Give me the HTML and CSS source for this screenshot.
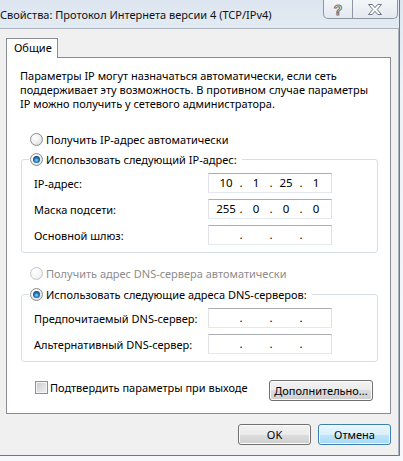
FILE: index.html
```html
<!DOCTYPE html>
<html lang="ru">
<head>
<meta charset="utf-8">
<title>Свойства: Протокол Интернета версии 4 (TCP/IPv4)</title>
<link rel="stylesheet" href="styles.css">
</head>
<body>
<div class="window">
  <div class="titlebar">
    <div class="title">Свойства: Протокол Интернета версии 4 (TCP/IPv4)</div>
    <div class="caption-btns">
      <div class="cbtn help">
        <svg width="14" height="15" viewBox="0 0 14 15"><text x="7" y="12.5" text-anchor="middle" font-family="Liberation Sans, sans-serif" font-weight="bold" font-size="14" fill="#ffffff" stroke="#6d7681" stroke-width="1">?</text></svg>
      </div>
      <div class="cbtn close">
        <svg width="14" height="11" viewBox="0 0 14 11"><path d="M0.5 0.5h3.8l2.7 3.2 2.7-3.2h3.8l-4.3 5 4.3 5h-3.8l-2.7-3.2-2.7 3.2h-3.8l4.3-5z" fill="#ffffff" stroke="#6d7681" stroke-width="1"/></svg>
      </div>
    </div>
  </div>
  <div class="client">
    <div class="tabs"><div class="tab">Общие</div></div>
    <div class="panel">
      <p class="intro">Параметры IP могут назначаться автоматически, если сеть<br>поддерживает эту возможность. В противном случае параметры<br>IP можно получить у сетевого администратора.</p>
      <div class="opt opt-first"><span class="radio"></span>Получить IP-адрес автоматически</div>
      <fieldset class="group group-ip">
        <legend><span class="opt"><span class="radio checked"></span>Использовать следующий IP-адрес:</span></legend>
        <div class="row"><span class="lbl">IP-адрес:</span>
          <div class="ip"><span>10</span><span>.</span><span>1</span><span>.</span><span>25</span><span>.</span><span>1</span></div>
        </div>
        <div class="row"><span class="lbl">Маска подсети:</span>
          <div class="ip"><span>255</span><span>.</span><span>0</span><span>.</span><span>0</span><span>.</span><span>0</span></div>
        </div>
        <div class="row"><span class="lbl">Основной шлюз:</span>
          <div class="ip"><span></span><span>.</span><span></span><span>.</span><span></span><span>.</span><span></span></div>
        </div>
      </fieldset>
      <div class="opt opt-mid disabled"><span class="radio off"></span>Получить адрес DNS-сервера автоматически</div>
      <fieldset class="group group-dns">
        <legend><span class="opt"><span class="radio checked"></span>Использовать следующие адреса DNS-серверов:</span></legend>
        <div class="row"><span class="lbl">Предпочитаемый DNS-сервер:</span>
          <div class="ip"><span></span><span>.</span><span></span><span>.</span><span></span><span>.</span><span></span></div>
        </div>
        <div class="row"><span class="lbl">Альтернативный DNS-сервер:</span>
          <div class="ip"><span></span><span>.</span><span></span><span>.</span><span></span><span>.</span><span></span></div>
        </div>
      </fieldset>
      <div class="bottom-row">
        <div class="opt chk"><span class="checkbox"></span>Подтвердить параметры при выходе</div>
        <button class="btn adv">Дополнительно...</button>
      </div>
    </div>
    <div class="actions">
      <button class="btn">OK</button>
      <button class="btn cancel">Отмена</button>
    </div>
  </div>
</div>
</body>
</html>
```
FILE: styles.css
```css
* { box-sizing: border-box; }
html, body { margin: 0; }
body {
  width: 403px;
  height: 461px;
  overflow: hidden;
  background: linear-gradient(#dde6f0, #eef3f8 20%, #f6f8fb);
  font-family: "Segoe UI", "Noto Sans", sans-serif;
  font-size: 11px;
  color: #000;
}
.window {
  width: 400px;
  border-right: 1px solid #6e7b8b;
}
.titlebar {
  height: 28px;
  display: flex;
  align-items: flex-start;
}
.title {
  flex: 1;
  padding-top: 7px;
  font-size: 11px;
  line-height: 16px;
  white-space: nowrap;
  color: #111;
}
.caption-btns {
  display: flex;
  margin-right: 1px;
}
.cbtn {
  height: 19px;
  border: 1px solid #8d96a1;
  border-top: none;
  display: flex;
  align-items: center;
  justify-content: center;
  background: linear-gradient(#f3f6f9, #e4e9ef);
}
.help { width: 30px; border-radius: 0 0 0 5px; }
.close { width: 45px; border-left: none; border-radius: 0 0 5px 0; }

.client {
  height: 428px;
  background: #f0f0f0;
  border-top: 1px solid #a9b2bd;
  border-right: 1px solid #a9b2bd;
  border-bottom: 1px solid #6f7883;
  padding: 9px 0 0 6px;
}
.tabs { display: flex; }
.tab {
  position: relative;
  z-index: 1;
  width: 52px;
  height: 20px;
  margin-bottom: -1px;
  padding-left: 7px;
  border: 1px solid #898c95;
  border-bottom: none;
  background: #fff;
  line-height: 18px;
}
.panel {
  width: 385px;
  height: 357px;
  border: 1px solid #898c95;
  background: #fff;
}
.intro {
  margin: 11px 0 0 13px;
  line-height: 14px;
  white-space: nowrap;
}
.opt {
  display: flex;
  align-items: center;
  height: 15px;
  line-height: 15px;
  white-space: nowrap;
}
.opt-first { margin: 21px 0 0 23px; }
.opt-mid { margin: 13px 0 0 23px; }
.disabled { color: #8d8d8d; }

.radio {
  flex: none;
  width: 13px;
  height: 13px;
  margin-right: 3px;
  border-radius: 50%;
  border: 1px solid #8a8c8e;
  background: radial-gradient(circle at 35% 30%, #ffffff 0, #f1f1f1 45%, #d2d4d6 100%);
  display: flex;
  align-items: center;
  justify-content: center;
}
.radio.checked::after {
  content: "";
  width: 7px;
  height: 7px;
  border-radius: 50%;
  background: radial-gradient(circle at 50% 60%, #8fdcff 0, #2b86c6 35%, #0d3f6a 75%, #0a2a44 100%);
}
.radio.off {
  border-color: #c4c6c8;
  background: radial-gradient(circle at 35% 30%, #ffffff 0, #f6f6f6 50%, #e6e6e6 100%);
}
.checkbox {
  flex: none;
  width: 13px;
  height: 13px;
  margin-right: 2px;
  border: 1px solid #8e8f8f;
  box-shadow: inset 0 0 0 1px #f4f4f4;
  background: linear-gradient(135deg, #c6cacf, #f2f2f2);
}

.group {
  width: 357px;
  margin: 5px 0 0 14px;
  padding: 0 0 7px 0;
  border: 1px solid #d5dfe5;
  border-radius: 3px;
  min-width: 0;
}
.group-dns { margin-top: 6px; }
.group legend {
  margin-left: 7px;
  padding: 0 5px 0 1px;
}
.row {
  display: flex;
  align-items: center;
  height: 20px;
  margin: 6px 0 0 12px;
}
.lbl { width: 174px; white-space: nowrap; }
.ip {
  width: 124px;
  height: 20px;
  border: 1px solid;
  border-color: #abadb3 #dbdfe6 #e3e9ef #e2e3ea;
  background: #fff;
  display: grid;
  grid-template-columns: 22px 8px 22px 8px 22px 8px 22px;
  padding-left: 6px;
  align-items: center;
  text-align: center;
  line-height: 18px;
  font-size: 11.5px;
}

.bottom-row {
  display: flex;
  align-items: flex-start;
  margin-top: 18px;
}
.chk { margin-left: 28px; }
.btn {
  font: inherit;
  color: #000;
  height: 21px;
  padding: 0;
  border: 1px solid #707070;
  border-radius: 3px;
  background: linear-gradient(#f2f2f2 0%, #ebebeb 50%, #dddddd 50%, #cfcfcf 100%);
  box-shadow: inset 0 0 0 1px #fbfbfb;
}
.adv { width: 104px; margin-left: auto; margin-right: 17px; }
.actions {
  display: flex;
  justify-content: flex-end;
  gap: 7px;
  margin-top: 10px;
  padding-right: 7px;
}
.actions .btn { width: 73px; }
.cancel {
  border-color: #3c7fb1;
  background: linear-gradient(#eaf6fd 0%, #d9f0fc 50%, #bee6fd 50%, #a7d9f5 100%);
  box-shadow: inset 0 0 0 1px #f4fbff;
}
```
